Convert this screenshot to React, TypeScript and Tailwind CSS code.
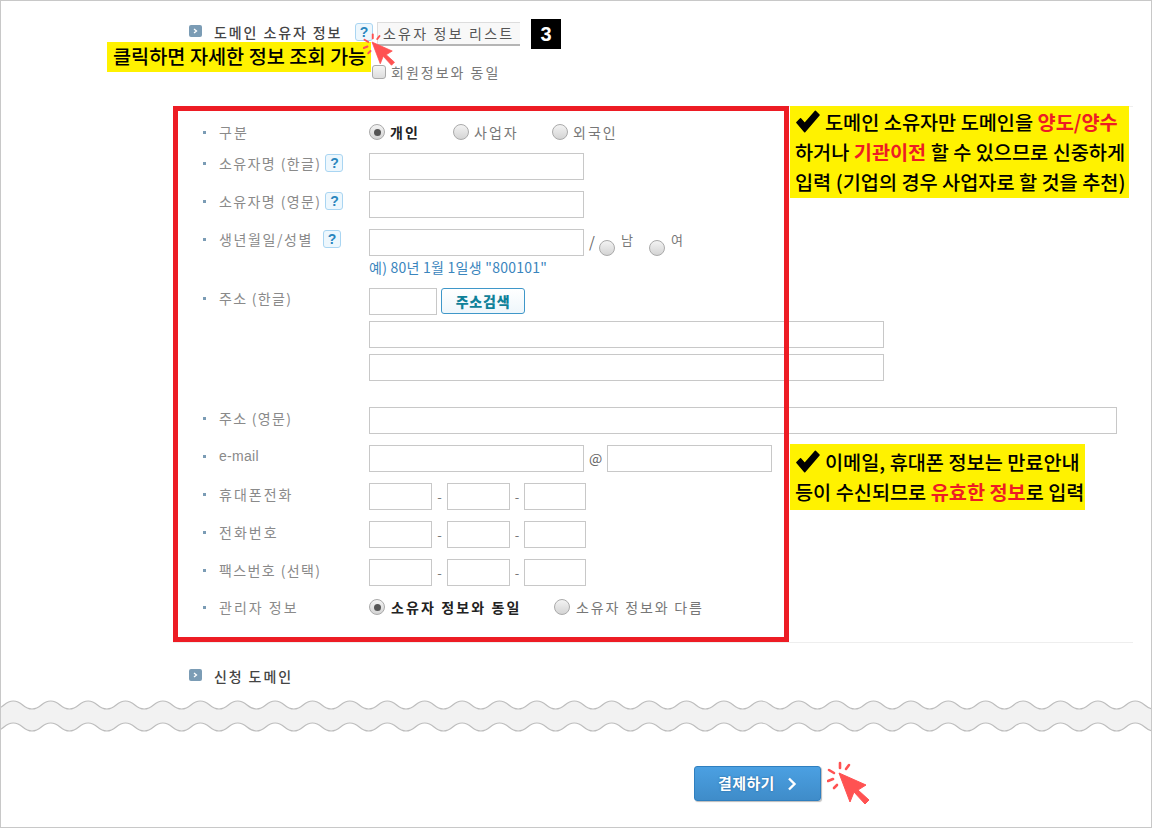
import React from "react";

const KR = '"Noto Sans CJK KR", "Noto Sans", sans-serif';

function Arrow() {
  return (
    <span className="flex h-[12px] w-[13px] items-center justify-center rounded-[2px] bg-[#7b9cb5]">
      <svg width="5" height="6" viewBox="0 0 5 6"><path d="M1 1l2.5 2L1 5" fill="none" stroke="#fff" strokeWidth="1.3" /></svg>
    </span>
  );
}

function Help() {
  return (
    <span className="flex h-[18px] w-[18px] items-center justify-center rounded-[3px] border border-[#a9d5f2] bg-[#edf7fd] text-[14px] font-bold leading-none text-[#2a86bd] [font-family:'Liberation_Sans',sans-serif]">?</span>
  );
}

function Radio({ on }: { on?: boolean }) {
  return (
    <span className="flex h-[16px] w-[16px] shrink-0 items-center justify-center rounded-full border border-[#aaaaaa] bg-gradient-to-b from-[#f3f3f3] to-[#d4d4d4]">
      {on && <span className="h-[7px] w-[7px] rounded-full bg-[#555555]" />}
    </span>
  );
}

function Input({ w }: { w: string }) {
  return <span className={`block h-[27px] shrink-0 border border-[#c8c8c8] bg-white ${w}`} />;
}

function Label({ children, help, gap, track }: { children: React.ReactNode; help?: boolean; gap?: string; track?: string }) {
  return (
    <div className="flex w-[191px] shrink-0 items-center">
      <span className="ml-[25px] mr-[13px] h-[3px] w-[3px] shrink-0 bg-[#7b9cb5]" />
      <span className={`whitespace-nowrap text-[14px] text-[#8a8a8a] ${track ?? "tracking-[2px]"}`}>{children}</span>
      {help && <span className={gap ?? "ml-[4px]"}><Help /></span>}
    </div>
  );
}

function Phone() {
  return (
    <div className="flex items-center">
      <Input w="w-[63px]" />
      <span className="w-[15px] text-center text-[13px] text-[#777]">-</span>
      <Input w="w-[63px]" />
      <span className="w-[14px] text-center text-[13px] text-[#777]">-</span>
      <Input w="w-[62px]" />
    </div>
  );
}

function Cursor({ className }: { className?: string }) {
  return (
    <svg className={className} viewBox="0 0 44 44" fill="none">
      <path d="M12 12 L39 24 L31 29 L42 39 L38 43 L27 31 L23 41 Z" fill="#ff5252" stroke="#ff5252" strokeWidth="1" strokeLinejoin="round" />
      <g stroke="#ff5252" strokeWidth="2.6" strokeLinecap="round">
        <path d="M13 2v5" />
        <path d="M2 9l5 3" />
        <path d="M1 20l5-2" />
        <path d="M22 4l-3 4" />
        <path d="M7 27l3-3" />
      </g>
    </svg>
  );
}

function Check() {
  return (
    <svg width="25" height="23" viewBox="0 0 27 24" className="mr-[5px] inline-block align-[-3px]">
      <path d="M2 13 L6 9 L10.5 14 L22 1 L26 5 L10.5 23 Z" fill="#000" stroke="#000" strokeWidth="1.5" strokeLinejoin="round" />
    </svg>
  );
}

function Wave() {
  const p = 37.4;
  const seg = (y: number, start: number) => {
    let d = `M${start} ${y + 8}`;
    for (let x = start; x < 1160; x += p) {
      d += ` C${x + p * 0.25} ${y + 8} ${x + p * 0.25} ${y} ${x + p / 2} ${y} C${x + p * 0.75} ${y} ${x + p * 0.75} ${y + 8} ${x + p} ${y + 8}`;
    }
    return d;
  };
  const s = -6.4;
  const top = seg(1, s);
  const bot = seg(23, s);
  return (
    <svg width="1150" height="34" viewBox="0 0 1150 34" className="block">
      <path d={`${top} V40 H${s} Z`} fill="#f2f2f2" />
      <path d={`${bot} V40 H${s} Z`} fill="#ffffff" />
      <path d={top} fill="none" stroke="#bdbdbd" strokeWidth="1.2" />
      <path d={bot} fill="none" stroke="#bdbdbd" strokeWidth="1.2" />
    </svg>
  );
}

export default function App() {
  return (
    <div
      className="relative h-[828px] w-[1152px] overflow-hidden border border-[#c8c8c8] bg-white"
      style={{ fontFamily: KR }}
    >
      {/* header */}
      <div className="ml-[188px] mt-[21px] flex h-[24px] items-center">
        <span className="-mt-[6px]"><Arrow /></span>
        <span className="ml-[12px] w-[141px] -translate-y-[2px] whitespace-nowrap text-[14px] font-medium tracking-[1.9px] text-[#444]">도메인 소유자 정보</span>
        <span className="-mt-[4px]"><Help /></span>
        <span className="ml-[4px] flex h-[24px] w-[143px] items-center whitespace-nowrap border-b-2 border-l border-t border-b-[#b5b5b5] border-l-[#dddddd] border-t-[#dddddd] bg-[#f8f8f8] pl-[5px] text-[14px] tracking-[2.2px] text-[#555]">소유자 정보 리스트</span>
        <span className="ml-[11px] flex h-[30px] w-[30px] items-center justify-center bg-black text-[20px] font-bold text-white [font-family:'Liberation_Sans',sans-serif]">3</span>
      </div>
      <div className="ml-[371px] mt-[17px] flex h-[18px] items-center">
        <span className="h-[14px] w-[14px] rounded-[3px] border border-[#aaaaaa] bg-gradient-to-b from-[#f5f5f5] to-[#dddddd]" />
        <span className="ml-[5px] text-[14px] tracking-[2px] text-[#777]">회원정보와 동일</span>
      </div>

      {/* form */}
      <div className="ml-[172px] mt-[25px] w-[960px] border-b border-t border-[#eeeeee]">
        <div className="relative -mt-px h-[536px] w-[616px] p-[5px] pt-[15px]">
          <div className="flex h-[22px] items-center">
            <Label>구분</Label>
            <Radio on />
            <span className="ml-[5px] w-[63px] text-[14px] font-bold tracking-[2px] text-[#222]">개인</span>
            <Radio />
            <span className="ml-[5px] w-[78px] text-[14px] tracking-[2px] text-[#777]">사업자</span>
            <Radio />
            <span className="ml-[5px] text-[14px] tracking-[2px] text-[#777]">외국인</span>
          </div>
          <div className="mt-[10px] flex h-[27px] items-start">
            <div className="flex h-[20px] items-center"><Label help track="tracking-[1.4px]">소유자명 (한글)</Label></div>
            <Input w="w-[215px]" />
          </div>
          <div className="mt-[11px] flex h-[27px] items-start">
            <div className="flex h-[20px] items-center"><Label help track="tracking-[1.4px]">소유자명 (영문)</Label></div>
            <Input w="w-[215px]" />
          </div>
          <div className="mt-[11px] flex h-[27px] items-start">
            <div className="flex h-[20px] items-center"><Label help gap="ml-[10px]" track="tracking-[1.6px]">생년월일/성별</Label></div>
            <Input w="w-[215px]" />
            <span className="ml-[5px] mt-[2px] text-[15px] text-[#666]">/</span>
            <div className="ml-[4px] mt-[11px]"><Radio /></div>
            <span className="ml-[6px] mt-[1px] w-[28px] text-[13px] text-[#777]">남</span>
            <div className="mt-[11px]"><Radio /></div>
            <span className="ml-[6px] mt-[1px] text-[13px] text-[#777]">여</span>
          </div>
          <div className="ml-[191px] mt-[1px] h-[21px] text-[14px] leading-[21px] tracking-[0.25px] text-[#3a85bd]">예) 80년 1월 1일생 "800101"</div>
          <div className="mt-[10px] flex h-[27px] items-start">
            <div className="flex h-[20px] items-center"><Label track="tracking-[1.3px]">주소 (한글)</Label></div>
            <Input w="w-[68px]" />
            <span className="ml-[4px] flex h-[26px] w-[84px] items-center justify-center rounded-[3px] border border-[#3f97c9] bg-gradient-to-b from-white to-[#eef6fb] text-[14px] font-black tracking-[0.8px] text-[#0f8199]">주소검색</span>
          </div>
          <div className="ml-[191px] mt-[6px]"><Input w="w-[515px]" /></div>
          <div className="ml-[191px] mt-[6px]"><Input w="w-[515px]" /></div>
          <div className="mt-[26px] flex h-[27px] items-start">
            <div className="flex h-[22px] items-center"><Label track="tracking-[1.3px]">주소 (영문)</Label></div>
            <Input w="w-[748px]" />
          </div>
          <div className="mt-[11px] flex h-[27px] items-start">
            <div className="flex h-[22px] items-center"><Label track="tracking-[0.3px]"><span className="[font-family:'Liberation_Sans',sans-serif]">e-mail</span></Label></div>
            <Input w="w-[215px]" />
            <span className="w-[23px] pt-[3px] text-center text-[14px] text-[#666]">@</span>
            <Input w="w-[165px]" />
          </div>
          <div className="mt-[11px] flex h-[27px] items-start">
            <div className="flex h-[22px] items-center"><Label>휴대폰전화</Label></div>
            <Phone />
          </div>
          <div className="mt-[11px] flex h-[27px] items-start">
            <div className="flex h-[22px] items-center"><Label>전화번호</Label></div>
            <Phone />
          </div>
          <div className="mt-[11px] flex h-[27px] items-start">
            <div className="flex h-[22px] items-center"><Label track="tracking-[1.4px]">팩스번호 (선택)</Label></div>
            <Phone />
          </div>
          <div className="mt-[10px] flex h-[22px] items-center">
            <Label>관리자 정보</Label>
            <Radio on />
            <span className="ml-[6px] w-[163px] whitespace-nowrap text-[14px] font-bold tracking-[2.1px] text-[#222]">소유자 정보와 동일</span>
            <Radio />
            <span className="ml-[6px] whitespace-nowrap text-[14px] tracking-[1.85px] text-[#777]">소유자 정보와 다름</span>
          </div>
          {/* red highlight drawn over the form */}
          <div className="pointer-events-none absolute inset-0 border-[5px] border-[#ed1c24]" />
        </div>
      </div>

      {/* applied domain */}
      <div className="ml-[188px] mt-[23px] flex h-[20px] items-center">
        <span className="-mt-[3px]"><Arrow /></span>
        <span className="ml-[12px] text-[14px] font-medium tracking-[1.9px] text-[#444]">신청 도메인</span>
      </div>

      <div className="mt-[14px]"><Wave /></div>

      {/* pay button */}
      <div className="ml-[693px] mt-[32px]">
        <button className="flex h-[35px] w-[127px] items-center rounded-[3px] border border-[#2f7fbf] bg-gradient-to-b from-[#4ba0e2] to-[#3f8cc9] pl-[23px] text-[15px] font-bold tracking-[0.4px] text-white shadow-[1px_1px_1px_#bbbbbb] [text-shadow:0_0_2px_#1f5f95]">
          결제하기
          <svg width="10" height="14" viewBox="0 0 10 14" className="ml-[12px]"><path d="M2 1.5L7.5 7 2 12.5" fill="none" stroke="#fff" strokeWidth="2.4" /></svg>
        </button>
      </div>

      {/* annotations */}
      <div className="absolute left-[106px] top-[41px] flex h-[30px] w-[264px] items-center whitespace-nowrap bg-[#fff200] pb-[2px] pl-[6px] text-[19.7px] font-medium text-black">클릭하면 자세한 정보 조회 가능</div>
      <Cursor className="absolute left-[362px] top-[32px] h-[33px] w-[33px]" />
      <div className="absolute left-[789px] top-[105px] h-[92px] w-[339px] bg-[#fff200] pl-[5px] pt-[1px] text-[19.7px] font-medium leading-[30px] text-black">
        <div className="whitespace-nowrap"><Check />도메인 소유자만 도메인을 <b className="font-bold text-[#ed1c24]">양도/양수</b></div>
        <div className="whitespace-nowrap">하거나 <b className="font-bold text-[#ed1c24]">기관이전</b> 할 수 있으므로 신중하게</div>
        <div className="whitespace-nowrap">입력 (기업의 경우 사업자로 할 것을 추천)</div>
      </div>
      <div className="absolute left-[789px] top-[443px] h-[66px] w-[295px] bg-[#fff200] pl-[5px] pt-[3px] text-[19.7px] font-medium leading-[30px] text-black">
        <div className="whitespace-nowrap"><Check />이메일, 휴대폰 정보는 만료안내</div>
        <div className="whitespace-nowrap">등이 수신되므로 <b className="font-bold text-[#ed1c24]">유효한 정보</b>로 입력</div>
      </div>
      <Cursor className="absolute left-[826px] top-[760px] h-[44px] w-[44px]" />
    </div>
  );
}
